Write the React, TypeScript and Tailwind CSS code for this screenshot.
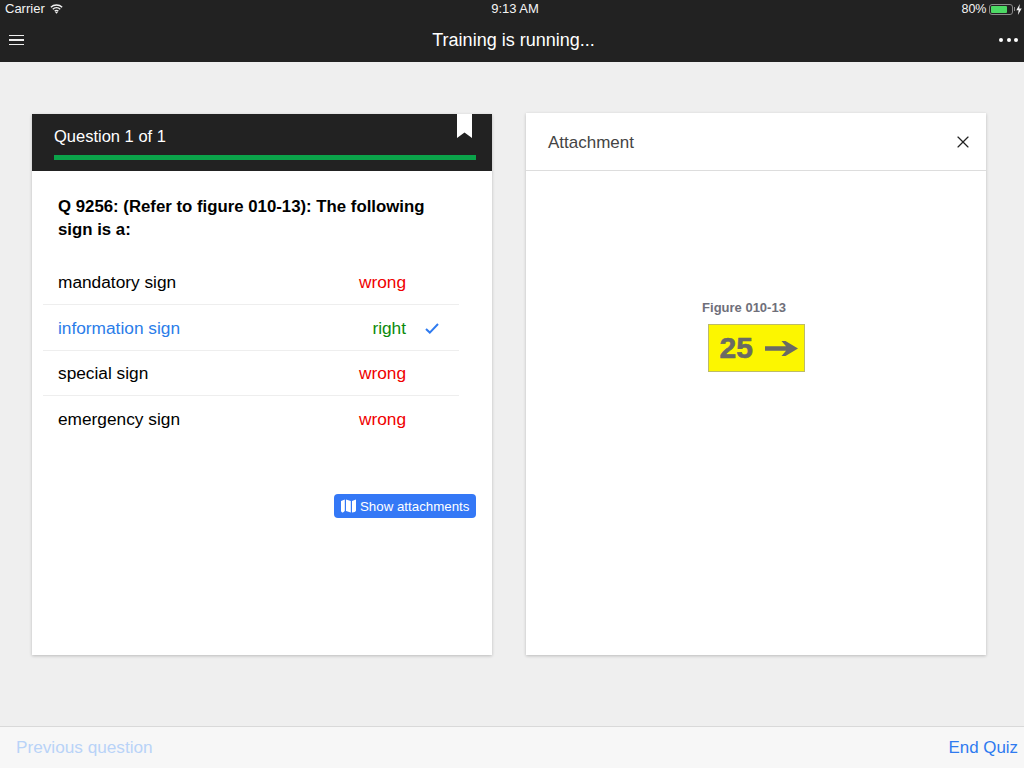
import { X } from "lucide-react";

const answers = [
  { label: "mandatory sign", result: "wrong" },
  { label: "information sign", result: "right" },
  { label: "special sign", result: "wrong" },
  { label: "emergency sign", result: "wrong" },
];

function WifiIcon() {
  return (
    <svg width="13" height="10" viewBox="0 0 14 11" fill="none" stroke="#f2f2f2" strokeWidth="1.6">
      <path d="M0.8 3.6C4.2 0.4 9.8 0.4 13.2 3.6" />
      <path d="M2.9 5.8C5.2 3.7 8.8 3.7 11.1 5.8" />
      <path d="M5 7.9C6.2 6.9 7.8 6.9 9 7.9" />
      <path d="M7 10.8L5.5 9.2C6.4 8.5 7.6 8.5 8.5 9.2Z" fill="#f2f2f2" stroke="none" />
    </svg>
  );
}

function Battery() {
  return (
    <div className="flex items-center">
      <div className="w-[24px] h-[11px] rounded-[3px] border border-[#8a8a8a] p-[1px]">
        <div className="w-[80%] h-full rounded-[1px] bg-[#4cd964]" />
      </div>
      <div className="w-[1.5px] h-[4px] bg-[#8a8a8a] ml-[1px]" />
      <svg width="6" height="11" viewBox="0 0 6 11" className="ml-[1px]">
        <path d="M3.8 0L0.3 6.2H2.6L1.9 11L5.7 4.4H3.2Z" fill="#f2f2f2" />
      </svg>
    </div>
  );
}

function SignFigure() {
  return (
    <div className="flex flex-col items-center mt-[130px]">
      <div className="text-[13px] leading-[14px] font-bold text-[#6f6f7a] ml-[-24px]">Figure 010-13</div>
      <div className="mt-[9px] w-[97px] h-[48px] bg-[#fcf600] border border-[#bdbb68] flex items-center pl-[11px] gap-[12px]">
        <span className="text-[30px] leading-none font-bold text-[#6a6a64] [-webkit-text-stroke:0.6px_#6a6a64]">25</span>
        <svg width="33" height="15" viewBox="0 0 33 15">
          <path d="M0 5.2H21L16.5 0H20.5L33 7.5L20.5 15H16.5L21 9.8H0Z" fill="#6a6a64" />
        </svg>
      </div>
    </div>
  );
}

export default function App() {
  return (
    <div className="w-[1024px] h-[768px] flex flex-col bg-[#efefef] text-black font-['Liberation_Sans',sans-serif] overflow-hidden">
      {/* Status + nav bar */}
      <header className="h-[62px] shrink-0 bg-[#222222] text-[#f4f4f4] flex flex-col">
        <div className="h-[18px] pl-[5px] pr-[2px] flex items-center justify-between text-[13px] relative">
          <div className="flex items-center gap-[5px]">
            <span>Carrier</span>
            <WifiIcon />
          </div>
          <span className="absolute left-1/2 -translate-x-1/2 ml-[3px]">9:13 AM</span>
          <div className="flex items-center gap-[2px]">
            <span className="text-[12.5px]">80%</span>
            <Battery />
          </div>
        </div>
        <div className="flex-1 flex items-center justify-between pl-[9px] pr-[6px] relative">
          <div className="flex flex-col gap-[3px] w-[15px]">
            <div className="h-[1.5px] bg-[#eeeeee]" />
            <div className="h-[1.5px] bg-[#eeeeee]" />
            <div className="h-[1.5px] bg-[#eeeeee]" />
          </div>
          <span className="absolute left-1/2 -translate-x-1/2 ml-[1.5px] text-[18px] text-white">Training is running...</span>
          <div className="flex gap-[3.5px]">
            <div className="w-[4px] h-[4px] rounded-full bg-white" />
            <div className="w-[4px] h-[4px] rounded-full bg-white" />
            <div className="w-[4px] h-[4px] rounded-full bg-white" />
          </div>
        </div>
      </header>

      <main className="flex-1 flex gap-[34px] pl-[32px] pr-[38px] pt-[51px] pb-[71px]">
        {/* Question card */}
        <section className="w-[460px] bg-white shadow-[0_1px_3px_rgba(0,0,0,0.22)] flex flex-col relative mt-[1px]">
          <div className="h-[57px] bg-[#222222] pl-[22px] pr-[16px] pt-[12px] relative">
            <div className="text-[16.5px] leading-[20px] text-white">Question 1 of 1</div>
            <div className="h-[5px] mt-[9px] bg-[#0ba34a]" />
            <svg width="15" height="24" viewBox="0 0 15 24" className="absolute right-[20px] top-0">
              <path d="M0 0H15V24L7.5 18.5L0 24Z" fill="#ffffff" />
            </svg>
          </div>
          <div className="pl-[26px] pr-[40px] pt-[24px] text-[16.8px] leading-[23px] font-bold">
            Q 9256: (Refer to figure 010-13): The following sign is a:
          </div>
          <ul className="mt-[18.5px] ml-[11px] mr-[33px] flex flex-col">
            {answers.map((a, i) => {
              const right = a.result === "right";
              return (
                <li
                  key={a.label}
                  className={`h-[45.5px] pl-[15px] pt-[3px] flex items-center text-[17.3px] ${i < 3 ? "border-b border-[#eeeeee]" : ""}`}
                >
                  <span className={`flex-1 ${right ? "text-[#2b7de9]" : "text-black"}`}>{a.label}</span>
                  <span className={`w-[60px] text-right ${right ? "text-[#0b8a0b]" : "text-[#f00000]"}`}>{a.result}</span>
                  <span className="w-[53px] pl-[19px] flex">
                    {right && (
                      <svg width="14" height="11" viewBox="0 0 14 11" fill="none" stroke="#2f7bf0" strokeWidth="2">
                        <path d="M1 6L4.8 9.6L13 1" />
                      </svg>
                    )}
                  </span>
                </li>
              );
            })}
          </ul>
          <div className="flex justify-end pr-[16px] mt-[52px]">
            <button className="h-[24px] w-[142px] rounded-[4px] bg-[#3478f6] text-white text-[13.3px] flex items-center pl-[7px] gap-[4px]">
              <svg width="15" height="14" viewBox="0 0 15 14" fill="#ffffff">
                <path d="M0 2L3.8 0.5V11.5C3.8 12 3 12.8 1.9 13.5C1 13.5 0 12.8 0 12ZM5 0.5L9.8 2V13.5L5 12ZM11 2L15 0.5V11.5C15 12.5 13 13.5 11 13.5Z" />
              </svg>
              <span className="pt-[2px]">Show attachments</span>
            </button>
          </div>
        </section>

        {/* Attachment card */}
        <section className="w-[460px] bg-white shadow-[0_1px_3px_rgba(0,0,0,0.22)] flex flex-col">
          <div className="h-[58px] shrink-0 border-b border-[#dddddd] pl-[22px] pr-[13px] flex items-center justify-between">
            <span className="text-[17px] pt-[3px] text-[#444444]">Attachment</span>
            <X size={20} strokeWidth={1.4} color="#222222" />
          </div>
          <SignFigure />
        </section>
      </main>

      <footer className="h-[42px] shrink-0 bg-[#f7f7f7] border-t border-[#d9d9d9] pl-[16px] pr-[6px] flex items-center justify-between">
        <span className="text-[17.2px] text-[#b9d3f8]">Previous question</span>
        <span className="text-[16.9px] text-[#2f7bf0]">End Quiz</span>
      </footer>
    </div>
  );
}
